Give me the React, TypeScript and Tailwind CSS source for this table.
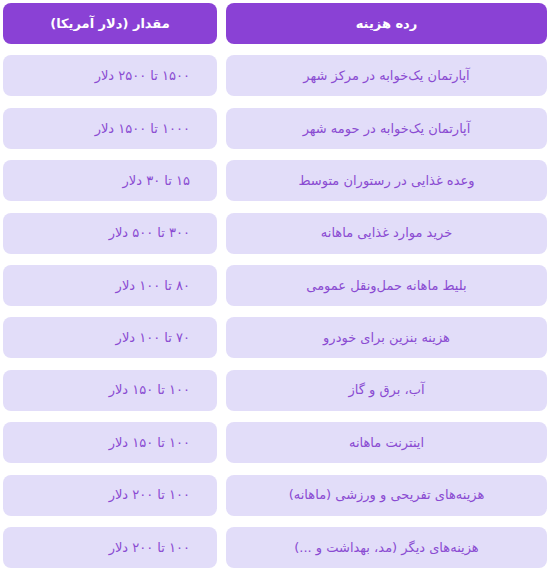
import React from "react";

const rows: [string, string][] = [
  ["آپارتمان یک‌خوابه در مرکز شهر", "۱۵۰۰ تا ۲۵۰۰ دلار"],
  ["آپارتمان یک‌خوابه در حومه شهر", "۱۰۰۰ تا ۱۵۰۰ دلار"],
  ["وعده غذایی در رستوران متوسط", "۱۵ تا ۳۰ دلار"],
  ["خرید موارد غذایی ماهانه", "۳۰۰ تا ۵۰۰ دلار"],
  ["بلیط ماهانه حمل‌ونقل عمومی", "۸۰ تا ۱۰۰ دلار"],
  ["هزینه بنزین برای خودرو", "۷۰ تا ۱۰۰ دلار"],
  ["آب، برق و گاز", "۱۰۰ تا ۱۵۰ دلار"],
  ["اینترنت ماهانه", "۱۰۰ تا ۱۵۰ دلار"],
  ["هزینه‌های تفریحی و ورزشی (ماهانه)", "۱۰۰ تا ۲۰۰ دلار"],
  ["هزینه‌های دیگر (مد، بهداشت و ...)", "۱۰۰ تا ۲۰۰ دلار"],
];

export default function App() {
  return (
    <div
      dir="rtl"
      className="w-[551px] h-[570px] bg-white pt-[3px] pl-[3px] pr-[4px] font-['DejaVu_Sans',sans-serif]"
    >
      <div className="grid grid-cols-[321px_214px] gap-x-[9px] gap-y-[11.4px]">
        {/* Header */}
        <div className="h-[41px] rounded-lg bg-[#8a41d5] flex items-center justify-center text-white text-[13px] font-bold">
          رده هزینه
        </div>
        <div className="h-[41px] rounded-lg bg-[#8a41d5] flex items-center justify-center text-white text-[13px] font-bold">
          مقدار (دلار آمریکا)
        </div>

        {rows.map(([label, value]) => (
          <React.Fragment key={label}>
            <div className="h-[41px] rounded-lg bg-[#e2ddf9] flex items-center justify-center text-[#8a4bd2] text-[13px]">
              {label}
            </div>
            <div className="h-[41px] rounded-lg bg-[#e2ddf9] flex items-center justify-start pr-[27px] text-[#8a4bd2] text-[13px]">
              {value}
            </div>
          </React.Fragment>
        ))}
      </div>
    </div>
  );
}
